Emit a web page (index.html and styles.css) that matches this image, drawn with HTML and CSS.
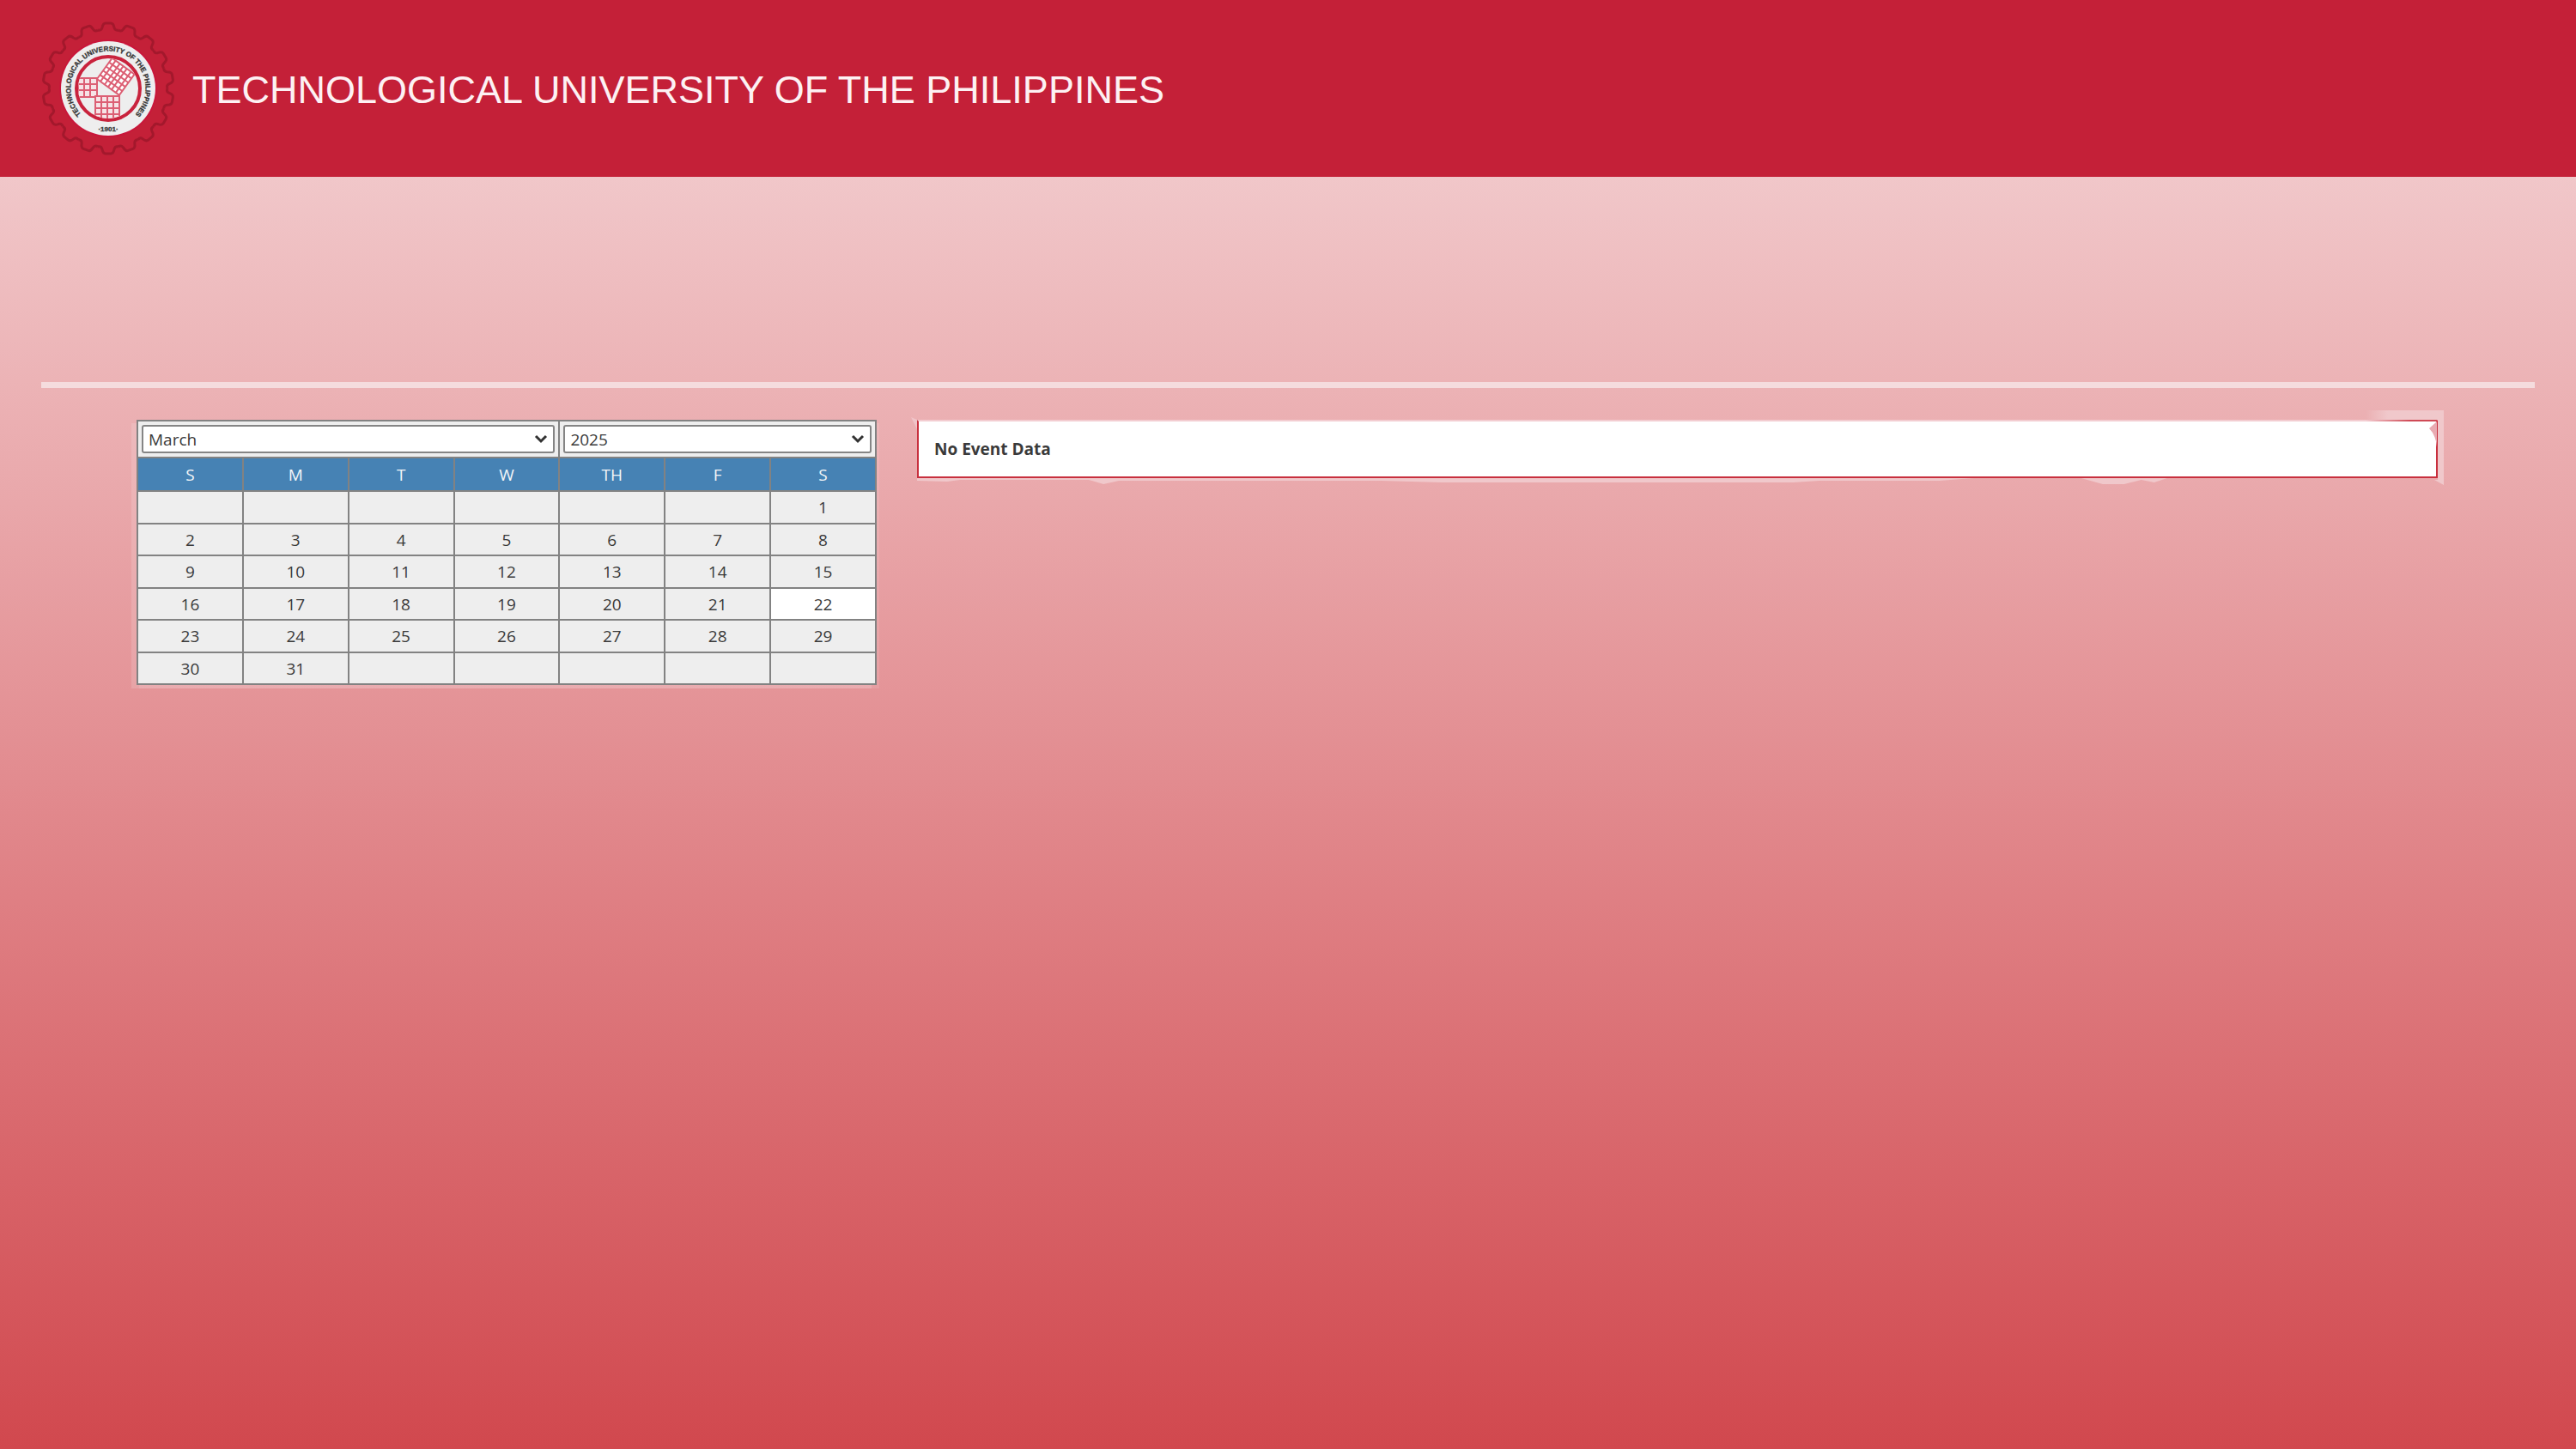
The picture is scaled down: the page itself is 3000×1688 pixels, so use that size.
FILE: index.html
```html
<!DOCTYPE html>
<html lang="en">
<head>
<meta charset="utf-8">
<title>Technological University of the Philippines</title>
<link rel="stylesheet" href="styles.css">
</head>
<body>
<header class="banner">
  <svg class="seal" viewBox="-80 -80 160 160" aria-hidden="true">
    <defs>
      <path id="ring" d="M-26 35 A43.600 43.600 0 1 1 26 35"/>
      <path id="tooth" d="M-12 -68Q-8 -67 -7 -71Q-6 -76 -3 -76H3Q6 -76 7 -71Q8 -67 12 -68"/>
      <g id="teeth"><use href="#tooth"/><use href="#tooth" transform="rotate(20)"/><use href="#tooth" transform="rotate(40)"/></g>
      <g id="third"><use href="#teeth"/><use href="#teeth" transform="rotate(60)"/></g>
      <clipPath id="core"><circle r="35"/></clipPath>
    </defs>
    <g class="gear">
      <use href="#third"/><use href="#third" transform="rotate(120)"/><use href="#third" transform="rotate(240)"/>
    </g>
    <circle r="57" fill="#c9163a"/>
    <circle r="55" fill="#eee"/>
    <circle r="37" fill="#eee" stroke="#c9233d" stroke-width="4"/>
    <g clip-path="url(#core)">
      <path class="grid" d="M-35 -12H-13V10H-35ZM-35 -5H-13M-35 2H-13M-28 -12V10M-21 -12V10"/>
      <path class="grid" d="M-15 9H13V38H-15ZM-15 16H13M-15 23H13M-15 30H13M-8 9V38M-1 9V38M6 9V38"/>
      <path class="grid dense" transform="translate(-13 -11) rotate(36)" d="M0 0V-30H32V0ZM0 -6H32M0 -12H32M0 -18H32M0 -24H32M5 0V-30M11 0V-30M16 0V-30M21 0V-30M27 0V-30"/>
    </g>
    <text class="seal-text"><textPath href="#ring" startOffset="50%">TECHNOLOGICAL UNIVERSITY OF THE PHILIPPINES</textPath></text>
    <text class="seal-text" y="50">·1901·</text>
  </svg>
  <h1 class="title">TECHNOLOGICAL UNIVERSITY OF THE PHILIPPINES</h1>
</header>
<main class="page">
  <hr class="rule">
  <div class="columns">
    <table class="calendar">
      <thead>
        <tr class="pickers">
          <td colspan="4"><select aria-label="Month"><option>March</option></select></td>
          <td colspan="3"><select aria-label="Year"><option>2025</option></select></td>
        </tr>
        <tr><th>S</th><th>M</th><th>T</th><th>W</th><th>TH</th><th>F</th><th>S</th></tr>
      </thead>
      <tbody>
        <tr><td></td><td></td><td></td><td></td><td></td><td></td><td>1</td></tr>
        <tr><td>2</td><td>3</td><td>4</td><td>5</td><td>6</td><td>7</td><td>8</td></tr>
        <tr><td>9</td><td>10</td><td>11</td><td>12</td><td>13</td><td>14</td><td>15</td></tr>
        <tr><td>16</td><td>17</td><td>18</td><td>19</td><td>20</td><td>21</td><td class="today">22</td></tr>
        <tr><td>23</td><td>24</td><td>25</td><td>26</td><td>27</td><td>28</td><td>29</td></tr>
        <tr><td>30</td><td>31</td><td></td><td></td><td></td><td></td><td></td></tr>
      </tbody>
    </table>
    <section class="events">
      <strong>No Event Data</strong>
      <svg class="corner-left" viewBox="0 0 20 20" aria-hidden="true"><path d="M0 0L9 4V18Z"/></svg>
      <svg class="corner-right" viewBox="0 0 100 90" aria-hidden="true">
        <defs>
          <linearGradient id="fade" gradientUnits="userSpaceOnUse" x1="8" x2="34"><stop offset="0" stop-color="#f0c8cb" stop-opacity="0"/><stop offset="1" stop-color="#f0c8cb"/></linearGradient>
          <linearGradient id="line" gradientUnits="userSpaceOnUse" x1="8" x2="60"><stop offset="0" stop-color="#cf4a56" stop-opacity="0"/><stop offset="1" stop-color="#cf4a56"/></linearGradient>
        </defs>
        <path d="M8 1H99V88L88 82H92V12H8Z" fill="url(#fade)"/>
        <path d="M82 22L91 14V44Q90 30 82 22Z" fill="#e8aab1"/>
        <path d="M8 12H91V14H8Z" fill="url(#line)"/>
      </svg>
      <svg class="edge" viewBox="0 0 1770 10" preserveAspectRatio="none" aria-hidden="true"><path class="glow" d="M0 0V3L35 4L50 2H200L217 7L235 3H540L610 5H1020L1050 3H1190L1230 0H1355L1380 7H1405L1425 2L1440 5L1455 0Z"/></svg>
    </section>
  </div>
</main>
</body>
</html>
```
FILE: styles.css
```css
* { box-sizing: border-box; }
html { height: 100%; }
body { margin: 0; min-height: 100%; background: linear-gradient(#f5d8da, #eaabae 32%, #d1484e); font: 19px/28px "Open Sans", sans-serif; color: #3a3a3a; }

/* Banner */
.banner { display: flex; align-items: center; gap: 18px; height: 206px; padding: 0 46px; background: #c42038; }
.seal { width: 160px; height: 160px; }
.gear { fill: none; stroke: #a3182c; stroke-width: 3; }
.grid { fill: #f6e3e6; stroke: #dc5f74; stroke-width: 2; }
.grid.dense { fill: #fff; }
.seal-text { font: bold 8px "Liberation Sans", sans-serif; fill: #222; stroke: #555; stroke-width: .4; text-anchor: middle; }
.title { margin: 0; padding-top: 4px; font: 45px/50px "Liberation Sans", sans-serif; color: #fdf1f3; }

/* Content */
.page { padding: 239px 48px 0; }
.rule { height: 7px; margin: 0; border: 0; background: #f5dcde; }
.columns { display: grid; grid-template-columns: 862px 1fr; gap: 47px; align-items: start; padding: 37px 113px 0 111px; }

/* Calendar */
.calendar { width: 100%; border-collapse: collapse; table-layout: fixed; background: #eee; text-align: center; box-shadow: -6px 4px 0 rgba(255, 255, 255, .14), 3px 4px 0 rgba(255, 255, 255, .1); }
.calendar td, .calendar th { height: 38px; padding: 0; border: 2px solid #828282; font-weight: 400; }
.calendar tbody tr:nth-child(even) td { height: 37px; }
.calendar th { height: 39px; background: #4682b4; color: #f4f6f8; }
.calendar .pickers td { height: 43px; padding: 0 4px; }
.calendar .today { background: #fff; }
.calendar select {
  display: block; width: 100%; height: 33px; padding: 0 6px; appearance: none;
  border: 2px solid #858585; border-radius: 3px; color: inherit; font: inherit; line-height: 28px;
  background: #fff url("data:image/svg+xml,%3Csvg xmlns='http://www.w3.org/2000/svg' width='16' height='12'%3E%3Cpath d='M2 2L8 8L14 2' fill='none' stroke='%23333' stroke-width='3'/%3E%3C/svg%3E") no-repeat right 6px center;
}

/* Events */
.events { position: relative; padding: 18px; border: 2px solid #c8303e; border-top-color: #f3cdd1; background: #fff; }
.events svg { position: absolute; fill: #f0c4c8; }
.events .glow { fill: #f0c8cb; }
.events .corner-left { left: -9px; top: -5px; width: 20px; height: 20px; clip-path: inset(0 13px 0 0); }
.events .corner-right { right: -10px; top: -14px; width: 100px; height: 90px; }
.events .edge { left: -2px; top: 100%; width: calc(100% + 4px); height: 10px; margin-top: 2px; }
```
